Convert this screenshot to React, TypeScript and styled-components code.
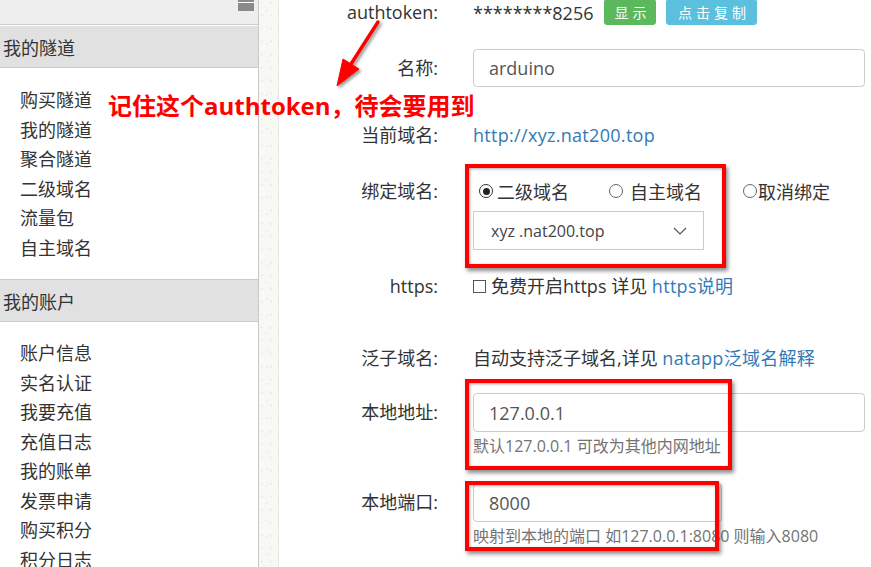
import React from "react";
import styled, { createGlobalStyle } from "styled-components";

const Global = createGlobalStyle`
  html, body { margin: 0; padding: 0; background: #fff; overflow: hidden; }
  body { font-family: "Open Sans", "Noto Sans CJK SC", sans-serif; color: #333; }
  * { box-sizing: border-box; }
`;

const Page = styled.div`
  position: relative;
  display: flex;
  width: 871px;
  height: 567px;
  overflow: hidden;
`;

const Sidebar = styled.aside`
  width: 259px;
  flex: none;
  border-right: 1px solid #c8c8c8;
  background: #fff;
  display: flex;
  flex-direction: column;
  & > * { flex: none; }
`;

const TopBar = styled.div`
  height: 25px;
  background: #eee;
  border-bottom: 1px solid #cbcbcb;
  display: flex;
  justify-content: flex-end;
  padding-right: 4px;
`;

const MenuIcon = styled.div`
  width: 16px;
  height: 11px;
  display: flex;
  flex-direction: column;
  gap: 1px;
  background: #fff;
  span { display: block; background: #8a8a8a; }
  span:first-child { height: 2px; }
  span:last-child { height: 8px; }
`;

const SectionHead = styled.div<{ $top?: boolean }>`
  height: ${(p) => (p.$top ? 42 : 43)}px;
  margin-top: ${(p) => (p.$top ? 1 : 0)}px;
  background: #e1e1e1;
  border-top: ${(p) => (p.$top ? "none" : "1px solid #cbcbcb")};
  border-bottom: 1px solid #cbcbcb;
  display: flex;
  align-items: center;
  padding: 1px 0 0 3px;
  font-size: 18px;
  color: #333;
`;

const NavList = styled.ul<{ $pt: number; $pb: number }>`
  list-style: none;
  margin: 0;
  padding: ${(p) => p.$pt}px 0 ${(p) => p.$pb}px 20px;
`;

const NavItem = styled.li`
  font-size: 18px;
  line-height: 29.5px;
  color: #333;
`;

const Gutter = styled.div`
  width: 20px;
  flex: none;
  border-right: 1px solid #e6e6e6;
  background-color: #f8f8f5;
  background-image:
    radial-gradient(circle at 30% 20%, #ecece6 0.8px, transparent 1.4px),
    radial-gradient(circle at 70% 60%, #efefea 0.8px, transparent 1.5px);
  background-size: 9px 13px, 11px 17px;
`;

const Main = styled.main`
  flex: 1;
  padding-right: 6px;
`;

const Row = styled.div<{ $mt: number }>`
  display: grid;
  grid-template-columns: 159px 1fr;
  column-gap: 35px;
  align-items: start;
  margin-top: ${(p) => p.$mt}px;
`;

const Label = styled.div<{ $lh: number }>`
  text-align: right;
  font-size: 18px;
  line-height: ${(p) => p.$lh}px;
  color: #333;
  white-space: nowrap;
`;

const Value = styled.div<{ $lh?: number }>`
  font-size: 18px;
  line-height: ${(p) => p.$lh ?? 24}px;
  color: #333;
  white-space: nowrap;
`;

const TokenLine = styled.div`
  display: flex;
  align-items: center;
  height: 25px;
  font-size: 18px;
`;

const Btn = styled.button<{ $bg: string; $w: number; $ml: number }>`
  height: 26px;
  width: ${(p) => p.$w}px;
  margin-left: ${(p) => p.$ml}px;
  margin-top: -1px;
  border: 1px solid ${(p) => p.$bg};
  border-radius: 3px;
  background: ${(p) => p.$bg};
  color: #fff;
  font-family: "Noto Sans CJK SC", sans-serif;
  font-size: 14px;
  letter-spacing: 4px;
  padding: 0 0 0 4px;
  line-height: 24px;
  text-align: center;
`;

const TextInput = styled.div<{ $w?: number; $h: number }>`
  width: ${(p) => (p.$w ? `${p.$w}px` : "100%")};
  height: ${(p) => p.$h}px;
  border: 1px solid #ccc;
  border-radius: 4px;
  display: flex;
  align-items: center;
  padding-left: 15px;
  font-size: 18px;
  color: #555;
  background: #fff;
`;

const Link = styled.span`
  color: #337ab7;
  letter-spacing: 0.3px;
`;

const RadioLine = styled.div`
  display: flex;
  align-items: center;
  height: 24px;
  padding-left: 6px;
`;

const RadioOption = styled.label<{ $gap: number; $ml: number }>`
  display: flex;
  align-items: center;
  gap: ${(p) => p.$gap}px;
  margin-left: ${(p) => p.$ml}px;
  font-size: 18px;
`;

const RadioDot = styled.span<{ $on?: boolean }>`
  width: 14px;
  height: 14px;
  border-radius: 50%;
  border: 1px solid ${(p) => (p.$on ? "#333" : "#666")};
  display: inline-flex;
  align-items: center;
  justify-content: center;
  background: #fff;
  &::after {
    content: "";
    width: 7px;
    height: 7px;
    border-radius: 50%;
    background: ${(p) => (p.$on ? "#222" : "transparent")};
  }
`;

const Select = styled.div`
  margin-top: 8px;
  width: 231px;
  height: 39px;
  border: 1px solid #ccc;
  display: flex;
  align-items: center;
  justify-content: space-between;
  padding: 0 16px 0 17px;
  font-size: 16px;
  color: #444;
`;

const CheckLine = styled.div`
  display: flex;
  align-items: center;
  gap: 5px;
  font-size: 18px;
  line-height: 24px;
`;

const CheckBox = styled.span`
  width: 13px;
  height: 13px;
  border: 1px solid #555;
  display: inline-block;
`;

const Help = styled.div`
  margin-top: 4px;
  font-size: 16px;
  line-height: 20px;
  color: #737373;
  white-space: nowrap;
`;

const RedBox = styled.div<{ $x: number; $y: number; $w: number; $h: number }>`
  position: absolute;
  left: ${(p) => p.$x}px;
  top: ${(p) => p.$y}px;
  width: ${(p) => p.$w}px;
  height: ${(p) => p.$h}px;
  border: 4px solid #ff0000;
  box-shadow: 2px 3px 4px rgba(0, 0, 0, 0.45), inset 1px 1px 3px rgba(0, 0, 0, 0.35);
  pointer-events: none;
`;

const Note = styled.div`
  position: absolute;
  left: 108px;
  top: 90px;
  font-family: "Open Sans", "Noto Sans CJK SC", sans-serif;
  font-weight: 700;
  font-size: 24px;
  line-height: 32px;
  color: #ff0000;
  white-space: nowrap;
`;

const ArrowSvg = styled.svg`
  position: absolute;
  left: 320px;
  top: 10px;
  overflow: visible;
`;

const Chevron = () => (
  <svg width="14" height="8" viewBox="0 0 14 8">
    <polyline points="1,1 7,7 13,1" fill="none" stroke="#555" strokeWidth="1.2" />
  </svg>
);

const tunnels = ["购买隧道", "我的隧道", "聚合隧道", "二级域名", "流量包", "自主域名"];
const account = ["账户信息", "实名认证", "我要充值", "充值日志", "我的账单", "发票申请", "购买积分", "积分日志"];

export default function App() {
  return (
    <>
      <Global />
      <Page>
        <Sidebar>
          <TopBar>
            <MenuIcon>
              <span />
              <span />
            </MenuIcon>
          </TopBar>
          <SectionHead $top>我的隧道</SectionHead>
          <NavList $pt={18} $pb={16}>
            {tunnels.map((t) => (
              <NavItem key={t}>{t}</NavItem>
            ))}
          </NavList>
          <SectionHead>我的账户</SectionHead>
          <NavList $pt={17} $pb={0}>
            {account.map((t) => (
              <NavItem key={t}>{t}</NavItem>
            ))}
          </NavList>
        </Sidebar>
        <Gutter />
        <Main>
          <Row $mt={0}>
            <Label $lh={25}>authtoken:</Label>
            <TokenLine>
              <span>********8256</span>
              <Btn $bg="#5cb85c" $w={52} $ml={11}>显示</Btn>
              <Btn $bg="#5bc0de" $w={91} $ml={10}>点击复制</Btn>
            </TokenLine>
          </Row>
          <Row $mt={24}>
            <Label $lh={38}>名称:</Label>
            <TextInput $h={38}>arduino</TextInput>
          </Row>
          <Row $mt={36}>
            <Label $lh={24}>当前域名:</Label>
            <Value>
              <Link>http://xyz.nat200.top</Link>
            </Value>
          </Row>
          <Row $mt={32}>
            <Label $lh={24}>绑定域名:</Label>
            <div>
              <RadioLine>
                <RadioOption $gap={4} $ml={0}>
                  <RadioDot $on />
                  二级域名
                </RadioOption>
                <RadioOption $gap={7} $ml={40}>
                  <RadioDot />
                  自主域名
                </RadioOption>
                <RadioOption $gap={1} $ml={41}>
                  <RadioDot />
                  取消绑定
                </RadioOption>
              </RadioLine>
              <Select>
                <span>xyz .nat200.top</span>
                <Chevron />
              </Select>
            </div>
          </Row>
          <Row $mt={24}>
            <Label $lh={24}>https:</Label>
            <CheckLine>
              <CheckBox />
              <span>
                免费开启https 详见 <Link>https说明</Link>
              </span>
            </CheckLine>
          </Row>
          <Row $mt={48}>
            <Label $lh={24}>泛子域名:</Label>
            <Value>
              自动支持泛子域名,详见 <Link>natapp泛域名解释</Link>
            </Value>
          </Row>
          <Row $mt={23}>
            <Label $lh={39}>本地地址:</Label>
            <div>
              <TextInput $h={39}>127.0.0.1</TextInput>
              <Help>默认127.0.0.1 可改为其他内网地址</Help>
            </div>
          </Row>
          <Row $mt={27}>
            <Label $lh={39}>本地端口:</Label>
            <div>
              <TextInput $h={39} $w={249}>8000</TextInput>
              <Help>映射到本地的端口 如127.0.0.1:8080 则输入8080</Help>
            </div>
          </Row>
        </Main>

        <RedBox $x={465} $y={164} $w={261} $h={104} />
        <RedBox $x={465} $y={379} $w={267} $h={91} />
        <RedBox $x={465} $y={481} $w={254} $h={70} />

        <Note>记住这个authtoken，待会要用到</Note>
        <ArrowSvg width="70" height="85" viewBox="0 0 70 85">
          <defs>
            <filter id="sh" x="-50%" y="-50%" width="200%" height="200%">
              <feDropShadow dx="2" dy="2" stdDeviation="1.5" floodColor="#000" floodOpacity="0.4" />
            </filter>
          </defs>
          <g filter="url(#sh)" fill="#ff0000" stroke="#ff0000">
            <line x1="58" y1="12" x2="31" y2="54" strokeWidth="3.5" strokeLinecap="round" />
            <polygon points="17,76 23,49 39,59" strokeWidth="1" />
          </g>
        </ArrowSvg>
      </Page>
    </>
  );
}
